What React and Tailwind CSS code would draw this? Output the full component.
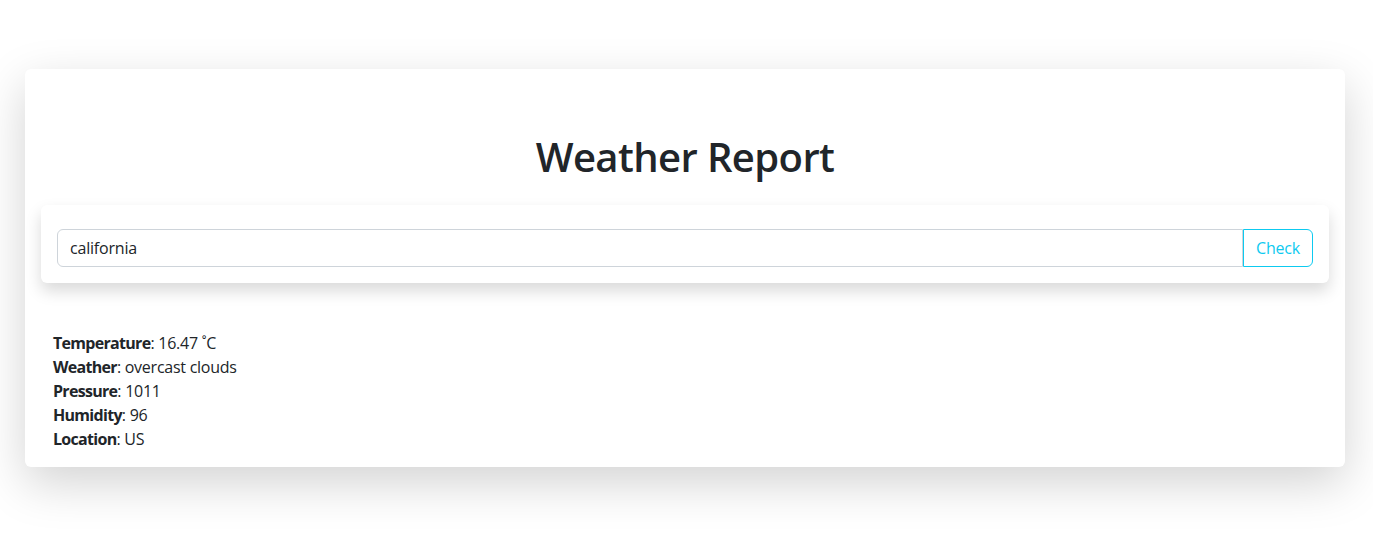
import React, { useState } from 'react';

const report = [
  { label: 'Temperature', value: '16.47 ˚C' },
  { label: 'Weather', value: 'overcast clouds' },
  { label: 'Pressure', value: '1011' },
  { label: 'Humidity', value: '96' },
  { label: 'Location', value: 'US' },
];

const App = () => {
  const [city, setCity] = useState('california');

  return (
    <div className="min-h-screen bg-white pt-[69px] text-[#212529] font-['Open_Sans',sans-serif]">
      <div className="ml-[25px] w-[1320px] rounded-md bg-white shadow-[0_16px_48px_rgba(0,0,0,0.175)] px-4 pt-16 pb-4">
        <h1 className="text-center text-[40px] leading-[48px] font-semibold tracking-[-0.6px] mb-6">Weather Report</h1>

        <div className="rounded-md bg-white shadow-[0_8px_16px_rgba(0,0,0,0.15)] px-4 pt-6 pb-4">
          <div className="flex">
            <input
              type="text"
              value={city}
              onChange={e => setCity(e.target.value)}
              className="flex-1 h-[38px] px-3 text-base tracking-[-0.2px] border border-[#ced4da] rounded-l-md outline-none"
            />
            <button className="w-[70px] h-[38px] border border-[#0dcaf0] text-[#0dcaf0] rounded-r-md text-base tracking-[-0.2px]">
              Check
            </button>
          </div>
        </div>

        <div className="mt-12 pl-3 text-base leading-6 tracking-[-0.25px]">
          {report.map(r => (
            <div key={r.label}>
              <span className="font-bold tracking-[-0.7px]">{r.label}</span>: {r.value}
            </div>
          ))}
        </div>
      </div>
    </div>
  );
};

export default App;
